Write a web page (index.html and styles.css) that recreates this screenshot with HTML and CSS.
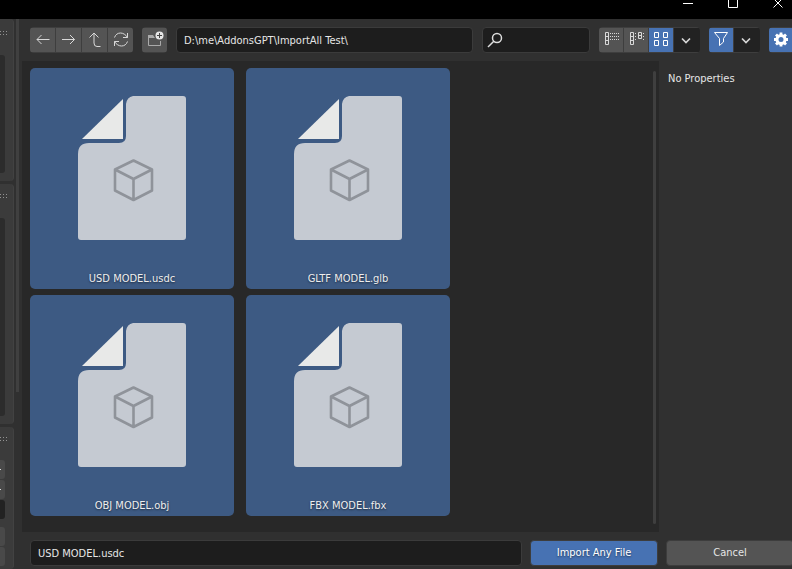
FILE: index.html
```html
<!DOCTYPE html>
<html lang="en">
<head>
<meta charset="utf-8">
<title>Import Any File</title>
<link rel="stylesheet" href="styles.css">
</head>
<body>
<svg class="defs" aria-hidden="true">
  <symbol id="doc" viewBox="0 0 108 144">
    <path d="M55 0H105Q108 0 108 3V141Q108 144 105 144H3Q0 144 0 141V58Q0 47 11 47H41Q48 47 48 40V8Q49 1 55 0Z" fill="#c5cad2"/>
    <path d="M45 3V43H4Z" fill="#e8e9e8"/>
    <path d="M55.500 64.500L74 73.500V94.500L55.500 104L37 94.500V73.500ZM37 73.500L55.500 83L74 73.500M55.500 83V104" fill="none" stroke="#8f939a" stroke-width="2.600" stroke-linejoin="round"/>
  </symbol>
  <symbol id="chevron" viewBox="0 0 24 24"><path d="M8 10.500L12 14.500L16 10.500" fill="none" stroke="#d6d6d6" stroke-width="1.700"/></symbol>
</svg>
<header class="titlebar">
  <button class="window-button" aria-label="Minimize"><svg viewBox="0 0 12 12"><path d="M1 6.500H11"/></svg></button>
  <button class="window-button" aria-label="Maximize"><svg viewBox="0 0 12 12"><path d="M1.500 1.500H10.500V10.500H1.500Z"/></svg></button>
  <button class="window-button" aria-label="Close"><svg viewBox="0 0 12 12"><path d="M1.500 1.500L10.500 10.500M10.500 1.500L1.500 10.500"/></svg></button>
</header>
<div class="workspace">
  <aside class="editor">
    <div class="panels">
      <section class="panel panel-short"><i class="grip"></i><div class="well"></div></section>
      <section class="panel panel-tall"><i class="grip"></i><div class="well"></div></section>
      <section class="panel panel-rest"><i class="grip"></i>
        <div class="stack"><span class="cell marked"></span><span class="cell marked"></span><span class="cell dark"></span></div>
        <div class="stack"><span class="cell"></span><span class="cell"></span></div>
      </section>
    </div>
    <div class="editor-scroll"></div>
  </aside>
  <main class="browser">
    <nav class="toolbar">
      <div class="group">
        <button aria-label="Back"><svg viewBox="0 0 24 24"><path d="M19.500 11.500H7M11.500 7L7 11.500L11.500 16"/></svg></button>
        <button aria-label="Forward"><svg viewBox="0 0 24 24"><path d="M6 11.500H18.500M14 7L18.500 11.500L14 16"/></svg></button>
        <button aria-label="Parent directory"><svg viewBox="0 0 24 24"><path d="M7.500 9.500L12 5L16.500 9.500M12 5V15Q12 18.500 15 18.500H18.500"/></svg></button>
        <button aria-label="Refresh"><svg viewBox="0 0 24 24"><path d="M6.500 9.500C8.500 3.500 16 3.500 19.500 9.500M19.500 5V9.500H15M19.500 13.500C17.500 19.500 10 19.500 6.500 13.500M6.500 18V13.500H11"/></svg></button>
      </div>
      <div class="group">
        <button aria-label="Create new directory"><svg viewBox="0 0 24 24"><path d="M12 9.500H6.500V17.500H18.500V13" stroke="#aaa"/><path d="M6 7H11L13 10H6Z" fill="#aaa" stroke="none"/><circle cx="17.500" cy="7.500" r="4" fill="#e6e6e6" stroke="none"/><path d="M17.500 5V10M15 7.500H20" stroke="#444"/></svg></button>
      </div>
      <input class="field path" type="text" aria-label="Directory" value="D:\me\AddonsGPT\ImportAll Test\">
      <label class="field search"><svg viewBox="0 0 24 24" role="img" aria-label="Search"><circle cx="14" cy="10" r="4.500"/><path d="M10.800 13.200L5 19"/></svg><input type="search" aria-label="Search"></label>
      <div class="group compact">
        <button aria-label="Vertical list"><svg viewBox="0 0 24 24"><path d="M6.500 4.500H9.500V16.500H6.500ZM6.500 8.500H9.500M6.500 12.500H9.500"/><path d="M11 5.500H21M11 8.500H21M11 11.500H21" stroke-dasharray="1 1"/></svg></button>
        <button aria-label="Horizontal list"><svg viewBox="0 0 24 24"><path d="M6.500 4.500H9.500V16.500H6.500ZM6.500 8.500H9.500M6.500 12.500H9.500M14.500 4.500H17.500V10.500H14.500ZM14.500 7.500H17.500"/><path d="M11.500 5V12M19.500 5V12" stroke-dasharray="1 2"/></svg></button>
        <button class="active" aria-label="Thumbnails"><svg viewBox="0 0 24 24"><path d="M5.500 4.500H9.500V9.500H5.500ZM14.500 4.500H18.500V9.500H14.500ZM5.500 12.500H9.500V17.500H5.500ZM14.500 12.500H18.500V17.500H14.500Z"/></svg></button>
        <button class="dark" aria-label="Display settings"><svg><use href="#chevron"/></svg></button>
      </div>
      <div class="group compact">
        <button class="active" aria-label="Filter"><svg viewBox="0 0 24 24"><path d="M5.500 4.500H18.500L14.500 10.500V14L10.500 17.500V10.500Z"/></svg></button>
        <button class="dark" aria-label="Filter settings"><svg><use href="#chevron"/></svg></button>
      </div>
      <div class="group">
        <button class="active" aria-label="Toggle properties"><svg viewBox="0 0 24 24"><circle cx="12" cy="11.500" r="4" stroke="#fff" stroke-width="3"/><path d="M12 4.500V7.500M12 15.500V18.500M5 11.500H8M16 11.500H19M7 6.500L9 8.500M15 14.500L17 16.500M17 6.500L15 8.500M9 14.500L7 16.500" stroke="#fff" stroke-width="2.800"/></svg></button>
      </div>
    </nav>
    <div class="content">
      <section class="files" aria-label="Files">
        <div class="grid">
          <button class="file"><svg><use href="#doc"/></svg><span>USD MODEL.usdc</span></button>
          <button class="file"><svg><use href="#doc"/></svg><span>GLTF MODEL.glb</span></button>
          <button class="file"><svg><use href="#doc"/></svg><span>OBJ MODEL.obj</span></button>
          <button class="file"><svg><use href="#doc"/></svg><span>FBX MODEL.fbx</span></button>
        </div>
        <div class="scrollbar"></div>
      </section>
      <aside class="properties">No Properties</aside>
    </div>
    <footer class="actions">
      <input class="field filename" type="text" aria-label="File name" value="USD MODEL.usdc">
      <button class="action primary">Import Any File</button>
      <button class="action">Cancel</button>
    </footer>
  </main>
</div>
</body>
</html>
```
FILE: styles.css
```css
* { box-sizing: border-box; }
body {
  margin: 0;
  height: 100vh;
  display: flex;
  flex-direction: column;
  overflow: hidden;
  background: #303030;
  color: #e6e6e6;
  font: 11px/16px "DejaVu Sans Condensed", "Open Sans", sans-serif;
}
button, input { font: inherit; color: inherit; margin: 0; padding: 0; border: 0; outline: 0; }
button { display: block; }
.defs { display: none; }

.titlebar {
  flex: none;
  height: 19px;
  display: flex;
  justify-content: flex-end;
  align-items: flex-start;
  gap: 33px;
  padding-right: 8px;
  background: #000;
}
.window-button { width: 12px; height: 12px; margin-top: -3px; background: none; }
.window-button svg { display: block; width: 12px; height: 12px; fill: none; stroke: #fff; }

.workspace { flex: 1; min-height: 0; display: flex; }

.editor { flex: none; width: 22px; display: flex; gap: 2px; background: #303030; }
.panels { width: 14px; display: flex; flex-direction: column; gap: 3px; }
.panel {
  padding-top: 10px;
  background: #3b3b3b;
  border-right: 1px solid #424242;
  border-radius: 0 4px 4px 0;
}
.panel-short { flex: 0 0 162px; padding-top: 12px; }
.panel-tall { flex: 0 0 240px; }
.panel-rest { flex: 1; }
.grip {
  display: block;
  width: 8px;
  height: 5px;
  background: repeating-linear-gradient(90deg, #929292 0 1px, transparent 1px 3px) 0 0 / 8px 1px repeat-x,
    repeating-linear-gradient(90deg, #929292 0 1px, transparent 1px 3px) 0 3px / 8px 1px repeat-x;
}
.well { width: 5px; height: 118px; margin-top: 19px; background: #2c2c2c; border-radius: 0 3px 3px 0; }
.panel-tall .well { height: 198px; }
.stack { width: 5px; margin-top: 18px; display: grid; gap: 1px; }
.stack + .stack { margin-top: 8px; }
.cell { height: 19px; background: #494949; border-radius: 0 3px 3px 0; }
.cell.dark { background: #222; }
.marked { display: flow-root; }
.marked::before { content: ""; display: block; width: 1px; height: 1px; margin-top: 9px; background: #ddd; }
.editor-scroll { width: 3px; height: 373px; background: #404040; }

.browser { flex: 1; min-width: 0; display: flex; flex-direction: column; overflow: hidden; }
.toolbar { flex: none; display: flex; gap: 9px; padding: 8px 0 8px 8px; margin-right: -2px; }
.group {
  flex: none;
  display: flex;
  gap: 1px;
  padding: 1px 0;
  border-radius: 4px;
  background: #3e3e3e;
  overflow: hidden;
}
.group button { width: 25px; height: 24px; background: #545454; }
.compact button { width: 24px; }
.group svg { display: block; width: 24px; height: 24px; fill: none; stroke: #d8d8d8; }
.group .active { background: #4772b3; }
.group .active svg { stroke: #fff; }
.group .dark { width: 26px; background: #222; }

.field { height: 26px; border: 1px solid #3b3b3b; border-radius: 4px; background: #1d1d1d; color: #e6e6e6; padding: 0 7px; }
.path { flex: 1; min-width: 0; }
.search { flex: none; width: 108px; display: flex; padding: 0; }
.search svg { flex: none; width: 24px; height: 24px; fill: none; stroke: #ddd; stroke-width: 1.5; }
.search input { flex: 1; min-width: 0; background: transparent; }

.content { flex: 1; min-height: 0; display: flex; }
.files { flex: 1; min-width: 0; display: flex; justify-content: space-between; padding: 7px 3px 8px 8px; background: #282828; }
.grid { display: grid; grid-template-columns: repeat(2, 204px); gap: 6px 12px; align-content: start; }
.file {
  height: 221px;
  padding: 28px 0 2px;
  display: flex;
  flex-direction: column;
  align-items: center;
  justify-content: space-between;
  background: #3d5a83;
  border-radius: 5px;
  color: #eee;
  text-shadow: 0 1px 2px #0008;
}
.file svg { width: 108px; height: 144px; }
.scrollbar { width: 3px; margin-top: 3px; border-radius: 2px; background: #3f3f3f; }
.properties { flex: none; width: 133px; padding: 10px 9px; }

.actions { flex: none; display: flex; gap: 8px; padding: 8px 0 3px 8px; margin-right: -2px; }
.filename { flex: 1; min-width: 0; }
.action { width: 128px; height: 26px; border: 1px solid #3d3d3d; border-radius: 4px; background: #545454; }
.action.primary { background: #4772b3; color: #fff; text-shadow: 0 1px 2px #0008; }
```
